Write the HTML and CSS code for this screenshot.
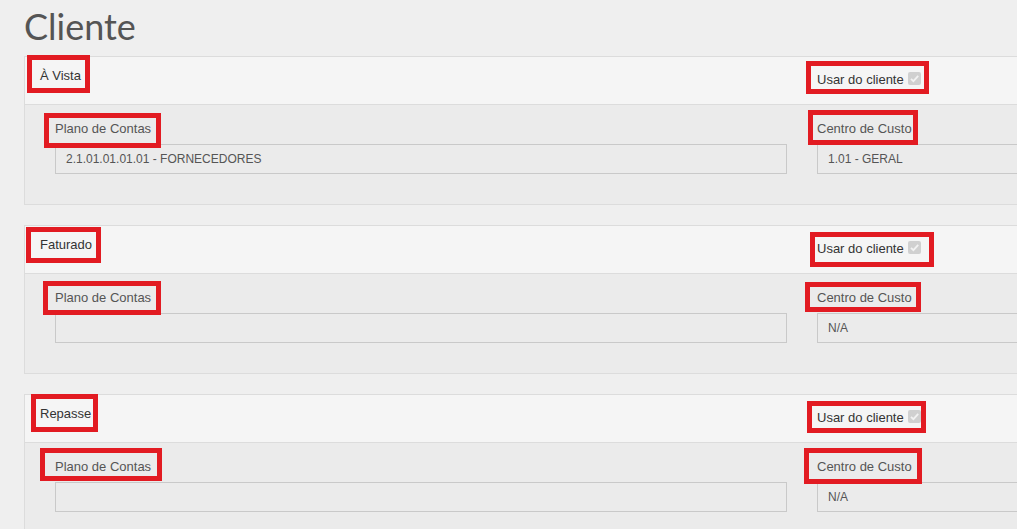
FILE: index.html
```html
<!DOCTYPE html>
<html lang="pt-BR">
<head>
<meta charset="utf-8">
<title>Cliente</title>
<link rel="stylesheet" href="styles.css">
</head>
<body>
<div class="viewport">
<div class="page">
  <h1 class="title">Cliente</h1>

  <section class="panel">
    <header class="panel-heading">
      <div class="heading-left"><span class="mark m1">À Vista</span></div>
      <div class="heading-right"><span class="mark m2">Usar do cliente <svg class="check" width="13" height="13" viewBox="0 0 13 13"><rect x="0" y="0" width="13" height="13" rx="2" fill="#d0d0d0"/><path d="M3 6.8 L5.4 9.2 L10.2 3.9" fill="none" stroke="#f2f2f2" stroke-width="1.8"/></svg></span></div>
    </header>
    <div class="panel-body">
      <div class="field">
        <label class="label"><span class="mark m3">Plano de Contas</span></label>
        <div class="input">2.1.01.01.01.01 - FORNECEDORES</div>
      </div>
      <div class="field">
        <label class="label"><span class="mark m4">Centro de Custo</span></label>
        <div class="input">1.01 - GERAL</div>
      </div>
    </div>
  </section>

  <section class="panel">
    <header class="panel-heading">
      <div class="heading-left"><span class="mark m5">Faturado</span></div>
      <div class="heading-right"><span class="mark m6">Usar do cliente <svg class="check" width="13" height="13" viewBox="0 0 13 13"><rect x="0" y="0" width="13" height="13" rx="2" fill="#d0d0d0"/><path d="M3 6.8 L5.4 9.2 L10.2 3.9" fill="none" stroke="#f2f2f2" stroke-width="1.8"/></svg></span></div>
    </header>
    <div class="panel-body">
      <div class="field">
        <label class="label"><span class="mark m7">Plano de Contas</span></label>
        <div class="input"></div>
      </div>
      <div class="field">
        <label class="label"><span class="mark m8">Centro de Custo</span></label>
        <div class="input">N/A</div>
      </div>
    </div>
  </section>

  <section class="panel">
    <header class="panel-heading">
      <div class="heading-left"><span class="mark m9">Repasse</span></div>
      <div class="heading-right"><span class="mark m10">Usar do cliente <svg class="check" width="13" height="13" viewBox="0 0 13 13"><rect x="0" y="0" width="13" height="13" rx="2" fill="#d0d0d0"/><path d="M3 6.8 L5.4 9.2 L10.2 3.9" fill="none" stroke="#f2f2f2" stroke-width="1.8"/></svg></span></div>
    </header>
    <div class="panel-body">
      <div class="field">
        <label class="label"><span class="mark m11">Plano de Contas</span></label>
        <div class="input"></div>
      </div>
      <div class="field">
        <label class="label"><span class="mark m12">Centro de Custo</span></label>
        <div class="input">N/A</div>
      </div>
    </div>
  </section>
</div>
</div>
</body>
</html>
```

FILE: styles.css
```css
html, body {
  margin: 0;
  padding: 0;
  background: #efefef;
}

body {
  font-family: "Liberation Sans", Arial, sans-serif;
  font-size: 13px;
  color: #333;
}

.viewport {
  width: 100vw;
  height: 100vh;
  overflow: hidden;
}

.page {
  padding-left: 24px;
  width: 1800px;
}

.title {
  font-family: Lato, "Open Sans", sans-serif;
  font-weight: 400;
  font-size: 36px;
  line-height: 40px;
  color: #555;
  margin: 6px 0 10px 0;
}

.panel {
  border: 1px solid #dcdcdc;
  margin-bottom: 20px;
  background: #ebebeb;
}

.panel-heading {
  display: flex;
  align-items: flex-start;
  box-sizing: border-box;
  height: 48px;
  padding: 11px 0 0 15px;
  background: #f5f5f5;
  border-bottom: 1px solid #dcdcdc;
}

.heading-left {
  flex: 0 0 777px;
  line-height: 15px;
  color: #333;
}

.heading-right {
  margin-top: 4px;
  line-height: 15px;
  color: #333;
}

.check {
  vertical-align: -1px;
  margin-left: 1px;
}

.panel-body {
  display: grid;
  grid-template-columns: 732px 732px;
  column-gap: 30px;
  padding-left: 30px;
  height: 99px;
  box-sizing: border-box;
}

.field {
  display: flex;
  flex-direction: column;
  align-items: flex-start;
}

.label {
  display: block;
  margin-top: 16px;
  margin-bottom: 8px;
  line-height: 15px;
  color: #555;
}

.input {
  align-self: stretch;
  box-sizing: border-box;
  height: 30px;
  border: 1px solid #c9c9c9;
  background: #ebebeb;
  padding: 0 10px;
  font-size: 12px;
  line-height: 28px;
  color: #555;
}

/* red annotation boxes drawn over the content */
.mark {
  position: relative;
  display: inline-block;
  line-height: 15px;
}

.mark::after {
  content: "";
  position: absolute;
  border: 5px solid #e21b22;
  z-index: 2;
  pointer-events: none;
}

.m1::after  { left: -13px; right: -9px;  top: -13px; bottom: -10px; }
.m2::after  { left: -11px; right: -8px;  top: -11px; bottom: -7px; }
.m3::after  { left: -11px; right: -10px; top: -8px;  bottom: -12px; }
.m4::after  { left: -9px;  right: -6px;  top: -11px; bottom: -9px; }
.m5::after  { left: -14px; right: -9px;  top: -10px; bottom: -11px; }
.m6::after  { left: -7px;  right: -13px; top: -9px;  bottom: -11px; }
.m7::after  { left: -12px; right: -10px; top: -9px;  bottom: -10px; }
.m8::after  { left: -12px; right: -9px;  top: -8px;  bottom: -7px; }
.m9::after  { left: -9px;  right: -7px;  top: -12px; bottom: -11px; }
.m10::after { left: -10px; right: -5px;  top: -9px;  bottom: -8px; }
.m11::after { left: -15px; right: -11px; top: -11px; bottom: -7px; }
.m12::after { left: -13px; right: -10px; top: -11px; bottom: -10px; }
```
